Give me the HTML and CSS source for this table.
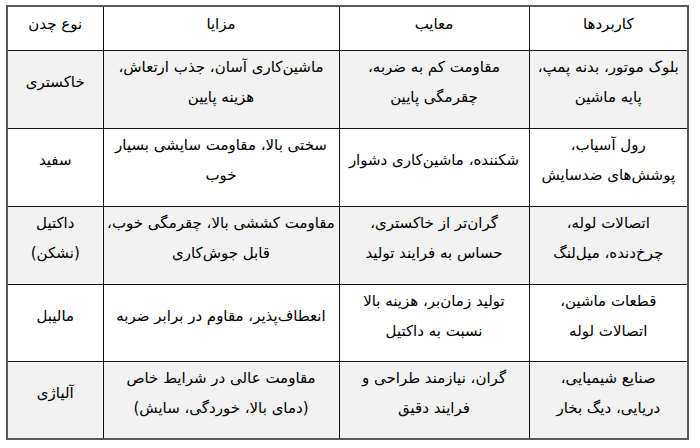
FILE: index.html
```html
<!DOCTYPE html>
<html lang="fa">
<head>
<meta charset="utf-8">
<title>انواع چدن</title>
<link rel="stylesheet" href="styles.css">
</head>
<body>
<table class="cast-table">
  <colgroup>
    <col class="c-type">
    <col class="c-pros">
    <col class="c-cons">
    <col class="c-uses">
  </colgroup>
  <thead>
    <tr class="head-row">
      <th dir="rtl">نوع چدن</th>
      <th dir="rtl">مزایا</th>
      <th dir="rtl">معایب</th>
      <th dir="rtl">کاربردها</th>
    </tr>
  </thead>
  <tbody>
    <tr class="shade">
      <td dir="rtl">خاکستری</td>
      <td dir="rtl">ماشین‌کاری آسان، جذب ارتعاش،<br>هزینه پایین</td>
      <td dir="rtl">مقاومت کم به ضربه،<br>چقرمگی پایین</td>
      <td dir="rtl">بلوک موتور، بدنه پمپ،<br>پایه ماشین</td>
    </tr>
    <tr>
      <td dir="rtl">سفید</td>
      <td dir="rtl">سختی بالا، مقاومت سایشی بسیار<br>خوب</td>
      <td dir="rtl">شکننده، ماشین‌کاری دشوار</td>
      <td dir="rtl">رول آسیاب،<br>پوشش‌های ضدسایش</td>
    </tr>
    <tr class="shade">
      <td dir="rtl">داکتیل<br>(نشکن)</td>
      <td dir="rtl">مقاومت کششی بالا، چقرمگی خوب،<br>قابل جوش‌کاری</td>
      <td dir="rtl">گران‌تر از خاکستری،<br>حساس به فرایند تولید</td>
      <td dir="rtl">اتصالات لوله،<br>چرخ‌دنده، میل‌لنگ</td>
    </tr>
    <tr class="short">
      <td dir="rtl">مالیبل</td>
      <td dir="rtl">انعطاف‌پذیر، مقاوم در برابر ضربه</td>
      <td dir="rtl">تولید زمان‌بر، هزینه بالا<br>نسبت به داکتیل</td>
      <td dir="rtl">قطعات ماشین،<br>اتصالات لوله</td>
    </tr>
    <tr class="shade">
      <td dir="rtl">آلیاژی</td>
      <td dir="rtl">مقاومت عالی در شرایط خاص<br>(دمای بالا، خوردگی، سایش)</td>
      <td dir="rtl">گران، نیازمند طراحی و<br>فرایند دقیق</td>
      <td dir="rtl">صنایع شیمیایی،<br>دریایی، دیگ بخار</td>
    </tr>
  </tbody>
</table>
</body>
</html>
```
FILE: styles.css
```css
html, body {
  margin: 0;
  padding: 0;
  background: #ffffff;
}
body {
  padding: 5px 6px;
  font-family: "DejaVu Sans", sans-serif;
  color: #000;
}
.cast-table {
  border-collapse: collapse;
  table-layout: fixed;
  width: 681px;
  border: 2px solid #5a5a5a;
}
.c-type { width: 96px; }
.c-pros { width: 236px; }
.c-cons { width: 190px; }
.c-uses { width: 159px; }
.cast-table th,
.cast-table td {
  border: 1px solid #111;
  text-align: center;
  vertical-align: middle;
  font-size: 15px;
  font-weight: normal;
  line-height: 30px;
  padding: 0 2px 14px;
}
.cast-table th {
  padding: 0 2px 8px;
}
.head-row { height: 44px; }
tbody tr { height: 78px; }
tbody tr.short { height: 77px; }
tr.shade td { background: #f2f2f2; }
```
